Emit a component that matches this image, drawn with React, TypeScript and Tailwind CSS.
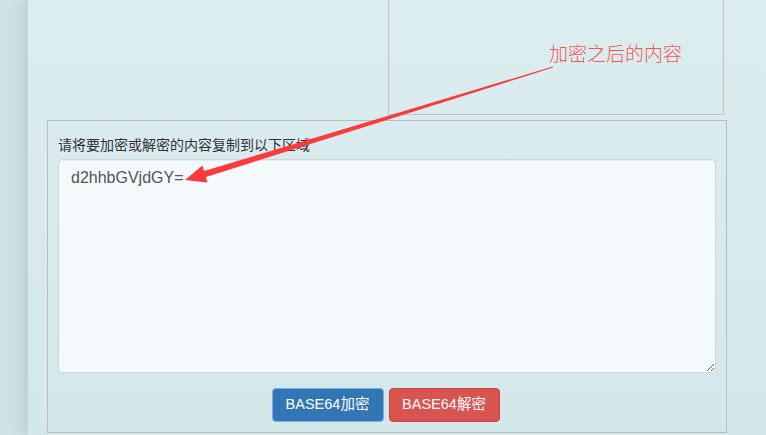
import React from 'react'

const cjk = { fontFamily: '"Liberation Sans", "Noto Sans CJK SC", sans-serif' }

export default function App() {
  return (
    <div className="relative h-[435px] w-full overflow-hidden bg-[#cfe3e7]" style={cjk}>
      <div className="ml-[28px] h-full w-[738px] bg-gradient-to-b from-[#dcedf0] to-[#d4e7ea] shadow-[-8px_0_10px_rgba(40,80,90,0.10)]">
        {/* upper result panel, top edge is scrolled off */}
        <div className="flex h-[115px]">
          <div className="ml-[360px] h-full w-[336px] border-x border-b border-[#c2c2c2]" />
        </div>

        <div className="ml-[19px] mt-[5px] h-[313px] w-[680px] border border-[#bcbcbc] px-[10px] pt-[14px]">
          <label className="mb-[4px] block text-[14px] leading-[20px] text-[#333]">
            请将要加密或解密的内容复制到以下区域
          </label>
          <textarea
            defaultValue="d2hhbGVjdGY="
            className="block h-[214px] w-[658px] rounded-[4px] border border-[#cfd6d9] bg-[#f4f9fb] px-[12px] py-[8px] text-[16px] leading-[20px] text-[#555] shadow-[inset_0_1px_1px_rgba(0,0,0,0.06)] outline-none"
            style={cjk}
          />
          <div className="mt-[15px] flex justify-center gap-[5px] pr-[3px]">
            <button className="h-[34px] w-[112px] rounded-[4px] border border-[#79aee2] bg-[#3376b5] text-[14.5px] text-white">
              BASE64加密
            </button>
            <button className="h-[34px] w-[111px] rounded-[4px] border border-[#d1433f] bg-[#d9534f] text-[14.5px] text-white">
              BASE64解密
            </button>
          </div>
        </div>
      </div>

      {/* annotation overlay */}
      <div className="absolute left-[549px] top-[40px] text-[19px] font-light leading-[26px] text-[#f75656]" style={{ fontFamily: '"Noto Sans CJK SC", sans-serif' }}>
        加密之后的内容
      </div>
      <svg className="pointer-events-none absolute left-0 top-0" width="766" height="435">
        <polygon
          points="185,180 207.6,182.6 205.9,176.9 553.1,67.6 552.9,66.4 204.1,171.1 202.4,165.4"
          fill="#fb3a3c"
        />
      </svg>
    </div>
  )
}
